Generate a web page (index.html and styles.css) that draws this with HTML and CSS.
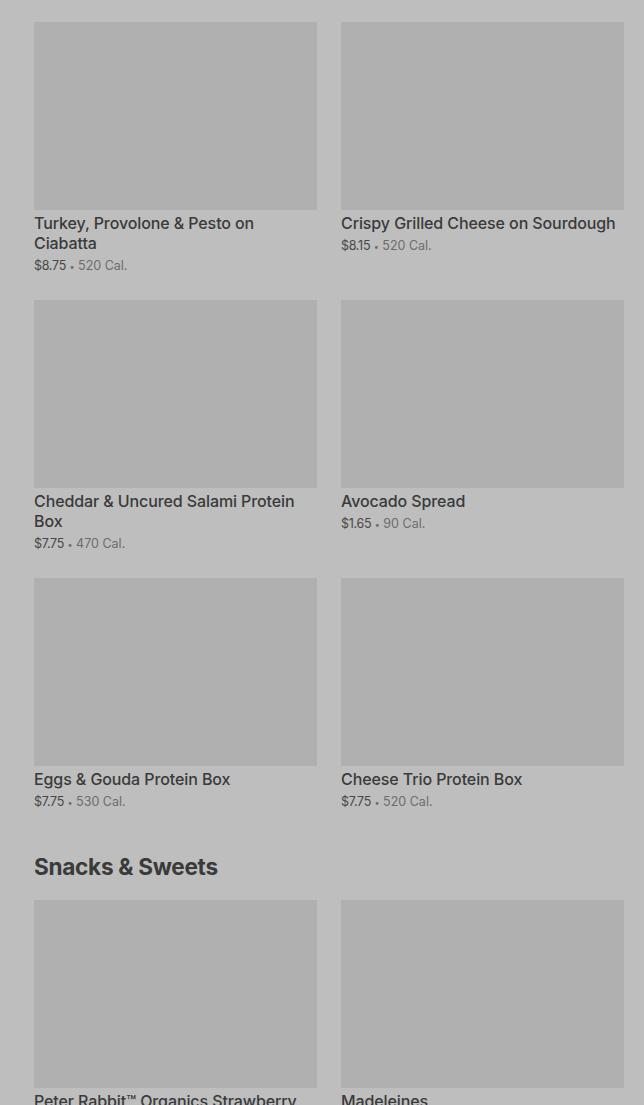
FILE: index.html
```html
<!DOCTYPE html>
<html>
<head>
<meta charset="utf-8">
<link rel="stylesheet" href="styles.css">
</head>
<body>
<main class="page">
  <section class="grid">
    <div class="card">
      <div class="thumb"></div>
      <div class="title">Turkey, Provolone &amp; Pesto on Ciabatta</div>
      <div class="meta"><span class="price">$8.75</span> <span class="dot">•</span> <span class="cal">520 Cal.</span></div>
    </div>
    <div class="card">
      <div class="thumb"></div>
      <div class="title">Crispy Grilled Cheese on Sourdough</div>
      <div class="meta"><span class="price">$8.15</span> <span class="dot">•</span> <span class="cal">520 Cal.</span></div>
    </div>
    <div class="card">
      <div class="thumb"></div>
      <div class="title">Cheddar &amp; Uncured Salami Protein Box</div>
      <div class="meta"><span class="price">$7.75</span> <span class="dot">•</span> <span class="cal">470 Cal.</span></div>
    </div>
    <div class="card">
      <div class="thumb"></div>
      <div class="title">Avocado Spread</div>
      <div class="meta"><span class="price">$1.65</span> <span class="dot">•</span> <span class="cal">90 Cal.</span></div>
    </div>
    <div class="card">
      <div class="thumb"></div>
      <div class="title">Eggs &amp; Gouda Protein Box</div>
      <div class="meta"><span class="price">$7.75</span> <span class="dot">•</span> <span class="cal">530 Cal.</span></div>
    </div>
    <div class="card">
      <div class="thumb"></div>
      <div class="title">Cheese Trio Protein Box</div>
      <div class="meta"><span class="price">$7.75</span> <span class="dot">•</span> <span class="cal">520 Cal.</span></div>
    </div>
  </section>
  <h2 class="section-title">Snacks &amp; Sweets</h2>
  <section class="grid">
    <div class="card">
      <div class="thumb"></div>
      <div class="title">Peter Rabbit™ Organics Strawberry Banana Fruit Snack</div>
      <div class="meta"><span class="price">$2.25</span> <span class="dot">•</span> <span class="cal">60 Cal.</span></div>
    </div>
    <div class="card">
      <div class="thumb"></div>
      <div class="title">Madeleines</div>
      <div class="meta"><span class="price">$2.95</span> <span class="dot">•</span> <span class="cal">200 Cal.</span></div>
    </div>
  </section>
</main>
</body>
</html>
```

FILE: styles.css
```css
html, body {
  margin: 0;
  padding: 0;
  background: #bebebe;
}
body {
  font-family: Inter, "Noto Sans", "Liberation Sans", sans-serif;
  color: #383838;
  overflow: hidden;
  height: 1105px;
}
.page {
  padding: 22px 20px 0 34px;
}
.grid {
  display: grid;
  grid-template-columns: 283px 283px;
  column-gap: 24px;
  row-gap: 24px;
}
.card {
  display: flex;
  flex-direction: column;
}
.thumb {
  height: 188px;
  background: #b0b0b0;
}
.title {
  margin-top: 3px;
  font-size: 16px;
  line-height: 20px;
  font-weight: 500;
  color: #3a3a3a;
  letter-spacing: -0.1px;
}
.meta {
  margin-top: 3px;
  height: 20px;
  font-size: 12.5px;
  line-height: 20px;
  color: #6c6c6c;
  white-space: nowrap;
}
.meta span {
  line-height: 1;
}
.price {
  color: #474747;
  letter-spacing: -0.3px;
}
.dot {
  font-size: 9px;
  color: #6c6c6c;
}
.section-title {
  margin: 40px 0 18px;
  font-size: 22.6px;
  line-height: 30px;
  font-weight: 700;
  color: #3a3a3a;
  letter-spacing: -0.3px;
}
```
